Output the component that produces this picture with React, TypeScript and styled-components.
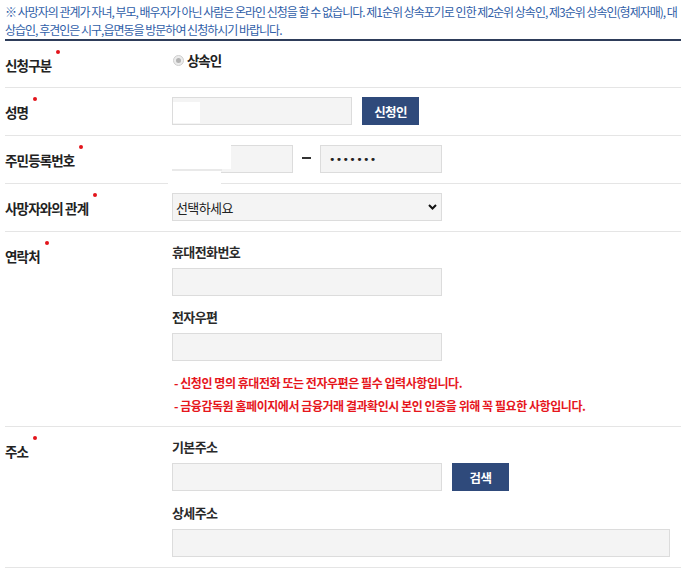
import React from "react";
import styled, { createGlobalStyle } from "styled-components";

const Global = createGlobalStyle`
  html, body { margin: 0; padding: 0; background: #fff; }
  body {
    font-family: "Noto Sans CJK KR", "Noto Sans", sans-serif;
    color: #222;
  }
  * { box-sizing: border-box; }
`;

const Page = styled.div`
  width: 676px;
  margin-left: 5px;
`;

const Notice = styled.p`
  margin: 0;
  padding: 3px 0 0;
  font-size: 12px;
  line-height: 18px;
  letter-spacing: -1px;
  color: #2f5ea8;
  white-space: nowrap;
  border-bottom: 2px solid #2e3d5a;
`;

const Row = styled.div`
  display: grid;
  grid-template-columns: 167px 1fr;
  border-bottom: 1px solid #e5e5e5;
`;

const Label = styled.div`
  padding: 16px 0 14px;
  font-size: 13.5px;
  font-weight: 700;
  line-height: 16px;
  letter-spacing: -0.85px;
  color: #222;
  white-space: pre;
`;

const LabelText = styled.span`
  position: relative;
  &::after {
    content: "";
    position: absolute;
    top: -5px;
    right: -9px;
    width: 4px;
    height: 4px;
    border-radius: 50%;
    background: #e3141b;
  }
`;

const Field = styled.div<{ $pt?: number; $pb?: number }>`
  padding: ${(p) => p.$pt ?? 9}px 0 ${(p) => p.$pb ?? 10}px;
  display: flex;
  flex-direction: column;
  align-items: flex-start;
`;

const Line = styled.div`
  display: flex;
  align-items: center;
  gap: 10px;
`;

const RadioLine = styled.div`
  display: flex;
  align-items: center;
  height: 20px;
  gap: 3px;
  font-size: 13.5px;
  font-weight: 700;
  letter-spacing: -1.1px;
  color: #222;
`;

const RadioMark = styled.span`
  position: relative;
  width: 11px;
  height: 11px;
  margin-left: 1px;
  border-radius: 50%;
  border: 1px solid #cfcfcf;
  background: #ececec;
  &::after {
    content: "";
    position: absolute;
    left: 2px;
    top: 2px;
    width: 5px;
    height: 5px;
    border-radius: 50%;
    background: #b3b3b3;
  }
`;

const Box = styled.div`
  position: relative;
`;

const Input = styled.input<{ $w: number }>`
  display: block;
  width: ${(p) => p.$w}px;
  height: 28px;
  margin: 0;
  padding: 0 8px;
  border: 1px solid #dcdcdc;
  background: #f4f4f4;
  font-family: "Noto Sans CJK KR", sans-serif;
  font-size: 12px;
  color: #333;
  outline: none;
`;

const MaskInput = styled(Input)`
  letter-spacing: 0.3px;
  font-family: "DejaVu Sans", sans-serif;
  font-size: 11px;
  color: #222;
`;

const Patch = styled.span<{ $c?: string }>`
  position: absolute;
  background: ${(p) => p.$c ?? "#fff"};
`;

const Dash = styled.span`
  width: 27px;
  display: flex;
  justify-content: center;
  &::before {
    content: "";
    width: 9px;
    height: 2px;
    background: #333;
    margin-top: -2px;
  }
`;

const Button = styled.button`
  width: 57px;
  height: 28px;
  margin: 0;
  padding: 0;
  border: none;
  background: #2f4a7b;
  color: #fff;
  font-family: "Noto Sans CJK KR", sans-serif;
  font-size: 12.5px;
  font-weight: 700;
  letter-spacing: -0.6px;
`;

const SelectWrap = styled.div`
  position: relative;
  width: 270px;
  height: 28px;
`;

const Select = styled.select`
  appearance: none;
  width: 100%;
  height: 28px;
  margin: 0;
  padding: 0 0 0 3px;
  border: 1px solid #dcdcdc;
  background: #f4f4f4;
  font-family: "Noto Sans CJK KR", sans-serif;
  font-size: 13px;
  letter-spacing: -0.6px;
  color: #222;
  outline: none;
`;

const Chevron = styled.svg`
  position: absolute;
  right: 5px;
  top: 11px;
  pointer-events: none;
`;

const SubLabel = styled.div<{ $mt?: number }>`
  margin-top: ${(p) => p.$mt ?? 0}px;
  margin-bottom: 7px;
  font-size: 13px;
  font-weight: 700;
  line-height: 19px;
  letter-spacing: -0.6px;
  color: #2a2a2a;
`;

const Notes = styled.ul`
  list-style: none;
  margin: 10px 0 0;
  padding: 0 0 0 2px;
`;

const Note = styled.li`
  font-size: 12px;
  font-weight: 700;
  line-height: 23px;
  letter-spacing: -0.45px;
  color: #e6161c;
  white-space: pre;
`;

export default function App() {
  return (
    <>
      <Global />
      <Page>
        <Notice>
          ※ 사망자의 관계가 자녀, 부모, 배우자가 아닌 사람은 온라인 신청을 할 수 없습니다. 제1순위 상속포기로 인한 제2순위 상속인, 제3순위 상속인(형제자매), 대
          <br />
          상습인, 후견인은 시구,읍면동을 방문하여 신청하시기 바랍니다.
        </Notice>

        <Row>
          <Label>
            <LabelText>신청구분</LabelText>
          </Label>
          <Field>
            <RadioLine>
              <RadioMark />
              상속인
            </RadioLine>
          </Field>
        </Row>

        <Row>
          <Label>
            <LabelText>성명</LabelText>
          </Label>
          <Field>
            <Line>
              <Box>
                <Input $w={180} readOnly />
                <Patch style={{ left: 1, top: 5, width: 27, height: 21 }} />
              </Box>
              <Button>신청인</Button>
            </Line>
          </Field>
        </Row>

        <Row>
          <Label>
            <LabelText>주민등록번호</LabelText>
          </Label>
          <Field>
            <Line style={{ gap: 0 }}>
              <Box>
                <Input $w={121} readOnly />
                <Patch style={{ left: 0, top: -2, width: 59, height: 26 }} />
                <Patch $c="#e9e9e9" style={{ left: 0, top: 24, width: 50, height: 2 }} />
                <Patch style={{ left: -4, top: 26, width: 53, height: 13 }} />
              </Box>
              <Dash />
              <MaskInput $w={122} type="password" defaultValue="1234567" readOnly />
            </Line>
          </Field>
        </Row>

        <Row>
          <Label>
            <LabelText>사망자와의 관계</LabelText>
          </Label>
          <Field>
            <SelectWrap>
              <Select defaultValue="">
                <option value="">선택하세요</option>
              </Select>
              <Chevron width="9" height="6" viewBox="0 0 9 6">
                <path d="M1 1 L4.5 4.5 L8 1" fill="none" stroke="#111" strokeWidth="2" />
              </Chevron>
            </SelectWrap>
          </Field>
        </Row>

        <Row>
          <Label>
            <LabelText>연락처</LabelText>
          </Label>
          <Field $pt={10} $pb={9}>
            <SubLabel>휴대전화번호</SubLabel>
            <Input $w={270} readOnly />
            <SubLabel $mt={11}>전자우편</SubLabel>
            <Input $w={270} readOnly />
            <Notes>
              <Note>- 신청인 명의 휴대전화 또는 전자우편은 필수 입력사항입니다.</Note>
              <Note>- 금융감독원 홈페이지에서 금융거래 결과확인시 본인 인증을 위해 꼭 필요한 사항입니다.</Note>
            </Notes>
          </Field>
        </Row>

        <Row>
          <Label>
            <LabelText>주소</LabelText>
          </Label>
          <Field $pt={10} $pb={10}>
            <SubLabel>기본주소</SubLabel>
            <Line>
              <Input $w={270} readOnly />
              <Button>검색</Button>
            </Line>
            <SubLabel $mt={12}>상세주소</SubLabel>
            <Input $w={498} readOnly />
          </Field>
        </Row>
      </Page>
    </>
  );
}
